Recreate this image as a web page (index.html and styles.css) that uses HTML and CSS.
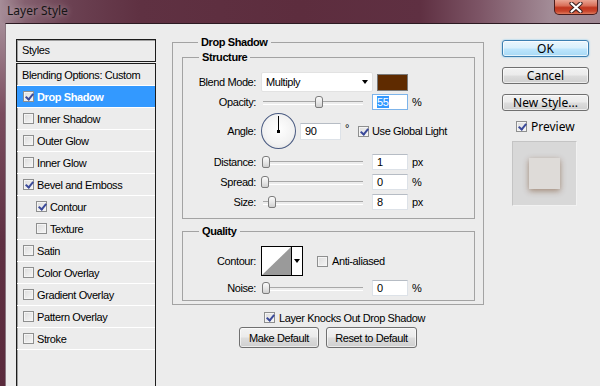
FILE: index.html
```html
<!DOCTYPE html>
<html lang="en">
<head>
  <meta charset="UTF-8">
  <title>Layer Style</title>
  <link rel="stylesheet" href="styles.css">
</head>
<body>

  <!-- Title bar -->
  <div class="titlebar">
    <span class="title">Layer Style</span>
    <span class="close">
      <svg width="14" height="11" viewBox="0 0 14 11">
        <path d="M2.5 1.5 L11.5 9.5 M11.5 1.5 L2.5 9.5" stroke="#3a2020" stroke-width="4.2" stroke-linecap="round"/>
        <path d="M2.5 1.5 L11.5 9.5 M11.5 1.5 L2.5 9.5" stroke="#fff" stroke-width="2.2" stroke-linecap="round"/>
      </svg>
    </span>
  </div>

  <div class="frame">
    <div class="frame-edge"></div>
    <div class="client">

      <!-- Styles list -->
      <aside class="styles-panel">
        <div class="styles-head">Styles</div>
        <ul class="styles-list">
          <li class="item plain">Blending Options: Custom</li>
          <li class="item selected"><span class="cb on"></span>Drop Shadow</li>
          <li class="item"><span class="cb"></span>Inner Shadow</li>
          <li class="item"><span class="cb"></span>Outer Glow</li>
          <li class="item"><span class="cb"></span>Inner Glow</li>
          <li class="item"><span class="cb on"></span>Bevel and Emboss</li>
          <li class="item sub"><span class="cb on"></span>Contour</li>
          <li class="item sub"><span class="cb"></span>Texture</li>
          <li class="item"><span class="cb"></span>Satin</li>
          <li class="item"><span class="cb"></span>Color Overlay</li>
          <li class="item"><span class="cb"></span>Gradient Overlay</li>
          <li class="item"><span class="cb"></span>Pattern Overlay</li>
          <li class="item"><span class="cb"></span>Stroke</li>
        </ul>
      </aside>

      <!-- Drop shadow settings -->
      <main class="settings">
        <fieldset class="group outer">
          <legend>Drop Shadow</legend>

          <fieldset class="group structure">
            <legend>Structure</legend>
            <div class="row">
              <span class="lbl">Blend Mode:</span>
              <div class="select">Multiply<span class="arrow"></span></div>
              <span class="swatch"></span>
            </div>
            <div class="row">
              <span class="lbl">Opacity:</span>
              <div class="slider"><span class="thumb" style="left: 54px"></span></div>
              <span class="field focus"><span class="sel">55</span></span>
              <span class="unit">%</span>
            </div>
            <div class="row angle">
              <span class="lbl">Angle:</span>
              <span class="dial"></span>
              <span class="field wide">90</span>
              <span class="unit deg">&deg;</span>
              <span class="cb on gl"></span>
              <span class="cb-text">Use Global Light</span>
            </div>
            <div class="row gap">
              <span class="lbl">Distance:</span>
              <div class="slider"><span class="thumb" style="left: 1px"></span></div>
              <span class="field">1</span>
              <span class="unit">px</span>
            </div>
            <div class="row">
              <span class="lbl">Spread:</span>
              <div class="slider"><span class="thumb" style="left: 0px"></span></div>
              <span class="field">0</span>
              <span class="unit">%</span>
            </div>
            <div class="row">
              <span class="lbl">Size:</span>
              <div class="slider"><span class="thumb" style="left: 7px"></span></div>
              <span class="field">8</span>
              <span class="unit">px</span>
            </div>
          </fieldset>

          <fieldset class="group quality">
            <legend>Quality</legend>
            <div class="row contour-row">
              <span class="lbl">Contour:</span>
              <div class="contour">
                <svg width="29" height="28" viewBox="0 0 29 28">
                  <rect width="29" height="28" fill="#fff"/>
                  <polygon points="0,28 29,0 29,28" fill="#9a9a9a"/>
                </svg>
                <span class="contour-drop"><span class="arrow"></span></span>
              </div>
              <span class="cb aa"></span>
              <span class="cb-text">Anti-aliased</span>
            </div>
            <div class="row gap">
              <span class="lbl">Noise:</span>
              <div class="slider"><span class="thumb" style="left: 1px"></span></div>
              <span class="field">0</span>
              <span class="unit">%</span>
            </div>
          </fieldset>
        </fieldset>

        <div class="knock"><span class="cb on"></span>Layer Knocks Out Drop Shadow</div>
        <div class="defaults">
          <button class="btn">Make Default</button>
          <button class="btn">Reset to Default</button>
        </div>
      </main>

      <!-- Dialog buttons -->
      <div class="actions">
        <button class="btn big ok">OK</button>
        <button class="btn big">Cancel</button>
        <button class="btn big">New Style...</button>
        <div class="preview-check"><span class="cb on"></span>Preview</div>
        <div class="preview"><div class="preview-square"></div></div>
      </div>

    </div>
  </div>

</body>
</html>
```

FILE: styles.css
```css
* { box-sizing: border-box; margin: 0; padding: 0; }
html, body { height: 100%; overflow: hidden; }
body {
  font-family: 'Liberation Sans', Arial, sans-serif;
  font-size: 11px;
  letter-spacing: -0.4px;
  color: #000;
  background: #5e2f40;
}

/* title bar */
.titlebar {
  height: 23px;
  display: flex;
  align-items: flex-start;
  background: linear-gradient(90deg, #a68d98 0px, #84606f 25px, #6b4152 70px, #5f3142 140px, #5d2d3e 300px, #5f3042 420px, #7d5566 480px, #a28b96 550px, #9f8893 600px);
}

.title {
  font-family: 'Noto Sans', sans-serif;
  font-size: 12px;
  letter-spacing: 0;
  line-height: 21px;
  padding-left: 7px;
  color: #151515;
  text-shadow: 0 0 6px rgba(255,255,255,0.5);
}

.close {
  margin-left: auto;
  margin-right: 2px;
  width: 44px;
  height: 15px;
  display: flex;
  align-items: center;
  justify-content: center;
  border: 1px solid #4a1c1c;
  border-top: none;
  border-radius: 0 0 5px 5px;
  background: linear-gradient(#eaa594 0%, #d9705a 40%, #c0361f 55%, #c8452c 80%, #df7a5c 100%);
}

.frame {
  display: flex;
  height: calc(100% - 23px);
}

.frame-edge {
  width: 5px;
  background: linear-gradient(#a58c97, #7a4c5e 25%, #5f3042 60%, #5a2a3c);
}

.client {
  flex: 1;
  display: flex;
  align-items: flex-start;
  background: #ececec;
  border-top: 1px solid #2c1a22;
  border-left: 1px solid #8a7680;
  padding-left: 10px;
}

/* checkbox */
.cb {
  position: relative;
  flex: none;
  width: 11px;
  height: 11px;
  border: 1px solid #8e8f8f;
  background: linear-gradient(135deg, #dcdcdc, #f6f6f6);
  box-shadow: inset 0 0 0 1px #f4f4f4;
}

.cb.on::after {
  content: "";
  position: absolute;
  left: 3px;
  top: 0px;
  width: 3px;
  height: 6px;
  border-right: 2px solid #3b4a9a;
  border-bottom: 2px solid #3b4a9a;
  transform: rotate(40deg);
}

/* styles list */
.styles-panel {
  width: 140px;
  margin-top: 15px;
  margin-bottom: -4px;
  align-self: stretch;
  display: flex;
  flex-direction: column;
}

.styles-head {
  height: 23px;
  border: 1px solid #1c1c1c;
  box-shadow: inset 1px 1px 0 #a0a0a0;
  padding-left: 5px;
  line-height: 21px;
}

.styles-list {
  list-style: none;
  flex: 1;
  margin-top: 1px;
  border: 1px solid #1c1c1c;
  box-shadow: inset 1px 0 0 #a0a0a0;
}

.item {
  height: 22px;
  display: flex;
  align-items: center;
  gap: 3px;
  padding-left: 6px;
  border-bottom: 1px solid #fff;
}

.item.plain { padding-left: 5px; }
.item.sub { padding-left: 19px; }

.item.selected {
  background: #3399ff;
  color: #fff;
  font-weight: bold;
}

/* settings */
.settings {
  width: 312px;
  margin-left: 16px;
  margin-top: 11px;
}

.group {
  border: 1px solid #a3a3a3;
  min-width: 0;
}

.group legend {
  font-weight: bold;
  line-height: 14px;
  padding: 0 3px;
  margin-left: 16px;
}

.outer {
  padding: 1px 8px 3px 9px;
}

.structure {
  padding: 8px 0 6px 0;
}

.quality {
  margin-top: 5px;
  padding: 8px 0 2px 0;
}

.row {
  height: 20px;
  display: flex;
  align-items: center;
}

.row.angle { height: 38px; }
.row.gap { margin-top: 2px; }
.row.contour-row { height: 30px; }

.lbl {
  width: 73px;
  margin-right: 5px;
  text-align: right;
}

.select {
  width: 112px;
  height: 20px;
  display: flex;
  align-items: center;
  justify-content: space-between;
  padding: 0 4px 0 4px;
  background: #fff;
  border: 1px solid #e2e2e2;
  border-radius: 2px;
}

.arrow {
  width: 0;
  height: 0;
  border-left: 3.5px solid transparent;
  border-right: 3.5px solid transparent;
  border-top: 4px solid #000;
}

.swatch {
  width: 31px;
  height: 17px;
  margin-left: 4px;
  background: #5f2b00;
  border: 1px solid #7a7a7a;
}

.slider {
  position: relative;
  width: 103px;
  height: 14px;
}

.slider::before {
  content: "";
  position: absolute;
  left: 2px;
  right: 1px;
  top: 6px;
  height: 2px;
  border-top: 1px solid #a8a8a8;
  border-bottom: 1px solid #fff;
}

.thumb {
  position: absolute;
  top: 1px;
  width: 8px;
  height: 12px;
  border: 1px solid #7c7c7c;
  border-radius: 3px 3px 2px 2px;
  background: linear-gradient(#fbfbfb, #e4e4e4 60%, #cfcfcf);
}

.field {
  width: 36px;
  height: 16px;
  margin-left: 8px;
  padding-left: 4px;
  line-height: 14px;
  background: #fff;
  border: 1px solid #dde2e8;
  border-top-color: #b6bcc4;
}

.field.focus {
  border-color: #7db4ea;
}

.sel {
  background: #3399ff;
  color: #fff;
  padding-right: 1px;
}

.field.wide {
  width: 41px;
  margin-left: 4px;
  height: 17px;
}

.unit { margin-left: 4px; }

.unit.deg {
  align-self: flex-start;
  margin-top: 10px;
  width: 4px;
}

.dial {
  position: relative;
  width: 35px;
  height: 36px;
  border-radius: 50%;
  border: 1px solid #4a5b82;
  background: radial-gradient(circle at 50% 45%, #ffffff 0%, #f2f2f2 60%, #dcdcdc 100%);
}

.dial::before {
  content: "";
  position: absolute;
  left: 16px;
  top: 2px;
  width: 1px;
  height: 16px;
  background: #000;
}

.dial::after {
  content: "";
  position: absolute;
  left: 15px;
  top: 16px;
  width: 3px;
  height: 3px;
  background: #000;
}

.cb.gl { margin-left: 9px; }
.cb.aa { margin-left: 14px; }

.cb-text { margin-left: 3px; }
.contour-row .cb-text { margin-left: 4px; }

.contour {
  display: flex;
  width: 42px;
  height: 30px;
  border: 1px solid #000;
  background: #fff;
}

.contour-drop {
  flex: 1;
  display: flex;
  align-items: center;
  justify-content: center;
  border-left: 1px solid #000;
  padding-bottom: 1px;
}

.knock {
  display: flex;
  align-items: center;
  gap: 4px;
  margin-top: 6px;
  padding-left: 92px;
  height: 13px;
}

.defaults {
  display: flex;
  gap: 7px;
  margin-top: 3px;
  padding-left: 67px;
}

.btn {
  font-family: 'Liberation Sans', Arial, sans-serif;
  font-size: 11px;
  letter-spacing: -0.4px;
  white-space: nowrap;
  color: #000;
  height: 21px;
  padding: 0;
  border: 1px solid #707070;
  border-radius: 3px;
  background: linear-gradient(#f2f2f2 0%, #ebebeb 48%, #dddddd 52%, #cfcfcf 100%);
  box-shadow: inset 0 0 0 1px rgba(255,255,255,0.6);
}

.defaults .btn:first-child { width: 80px; }
.defaults .btn:last-child { width: 91px; }

/* right column */
.actions {
  width: 87px;
  margin-left: 18px;
  margin-top: 16px;
  display: flex;
  flex-direction: column;
}

.btn.big {
  font-family: 'Noto Sans', sans-serif;
  font-size: 12px;
  letter-spacing: 0;
  height: 17px;
  line-height: 14px;
}

.btn.big + .btn.big { margin-top: 10px; }
.btn.big:nth-child(3) { margin-top: 11px; }

.btn.ok {
  border-color: #3c7fb1;
  background: linear-gradient(#eaf6fd 0%, #d9f0fc 48%, #bee6fd 52%, #a7d9f5 100%);
  box-shadow: 0 0 2px #6bc0f0, inset 0 0 0 1px rgba(255,255,255,0.7);
}

.preview-check {
  display: flex;
  align-items: center;
  gap: 4px;
  margin-top: 10px;
  padding-left: 14px;
  height: 11px;
  font-family: 'Noto Sans', sans-serif;
  font-size: 12px;
  letter-spacing: 0;
}

.preview {
  width: 65px;
  height: 65px;
  margin-top: 9px;
  margin-left: 10px;
  display: flex;
  align-items: center;
  justify-content: center;
  background: #d8d8d8;
  border: 1px solid #c4c4c4;
  border-right-color: #f2f2f2;
  border-bottom-color: #f2f2f2;
}

.preview-square {
  width: 31px;
  height: 31px;
  background: #dedbd8;
  box-shadow: 0 2px 6px rgba(95, 43, 0, 0.45);
}
```
